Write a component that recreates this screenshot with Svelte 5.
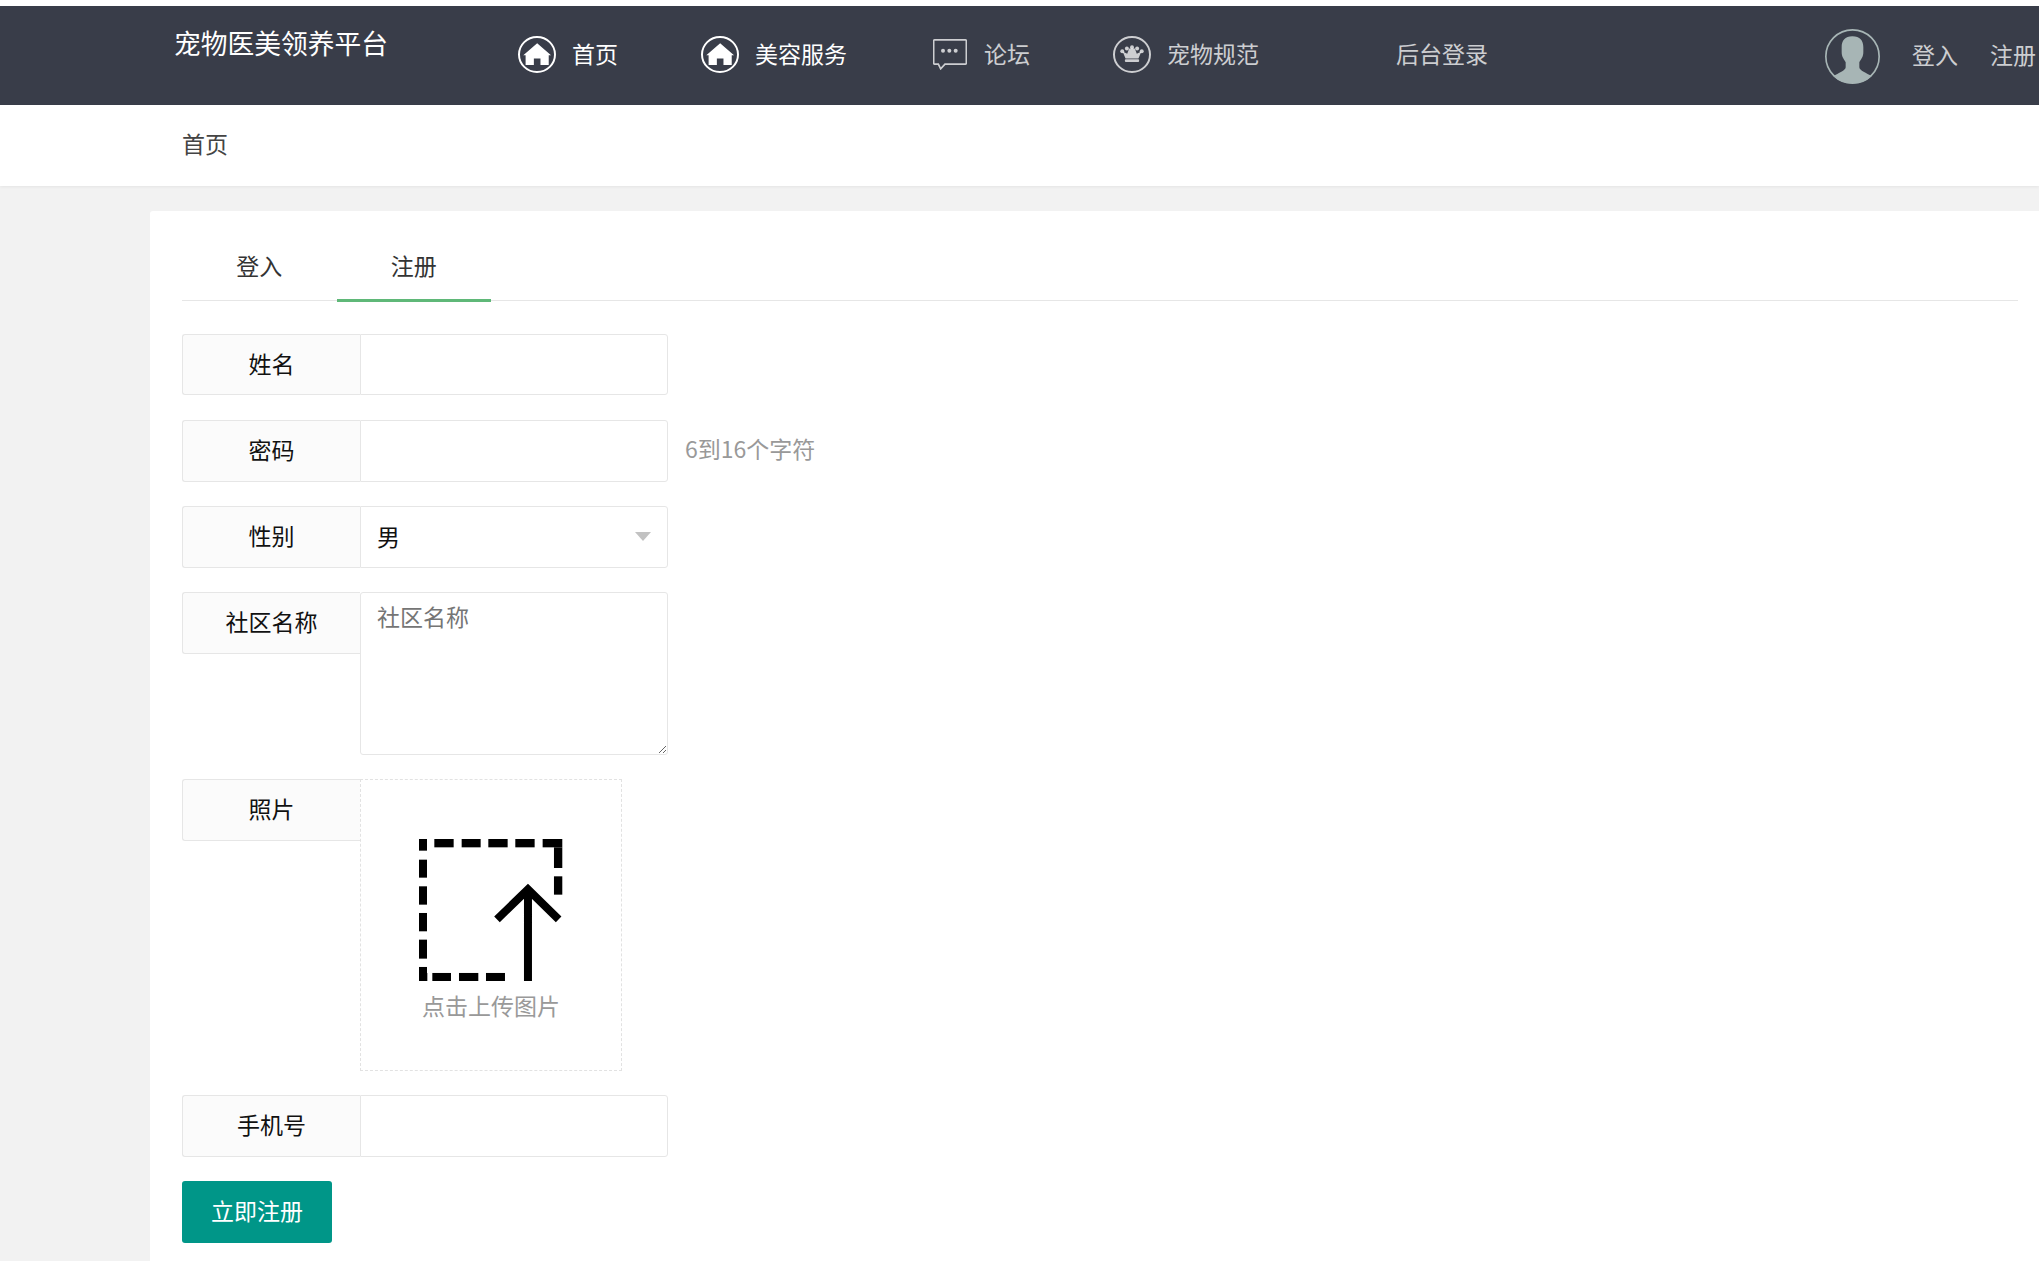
<script>
  const iconRects = [
    [0,0,24,35],[46,0,58,25],[128,0,57,25],[208,0,58,25],[289,0,58,25],[371,0,59,25],
    [405,25,25,62],[405,112,25,55],
    [0,62,24,54],[0,142,24,55],[0,222,24,55],[0,302,24,57],[0,384,24,43],
    [24,402,1,25],[40,402,56,25],[120,402,58,25],[201,402,57,25]
  ];
</script>

<div class="page">
  <header class="topbar">
    <div class="logo">宠物医美领养平台</div>
    <nav class="mainnav">
      <a class="item on">
        <svg class="ic" viewBox="0 0 115 112"><ellipse cx="57.5" cy="56" rx="54.5" ry="53" fill="none" stroke="currentColor" stroke-width="6"/><path d="M58 22 100 58H93V88H68V68H48V88H23V58H16Z" fill="currentColor"/></svg>
        <span>首页</span>
      </a>
      <a class="item on">
        <svg class="ic" viewBox="0 0 115 112"><ellipse cx="57.5" cy="56" rx="54.5" ry="53" fill="none" stroke="currentColor" stroke-width="6"/><path d="M58 22 100 58H93V88H68V68H48V88H23V58H16Z" fill="currentColor"/></svg>
        <span>美容服务</span>
      </a>
      <a class="item">
        <svg class="ic chat" viewBox="0 0 102 92"><path d="M5 2H97Q100 2 100 5V72Q100 75 97 75H36L23 89 16 75H5Q2 75 2 72V5Q2 2 5 2Z" fill="none" stroke="currentColor" stroke-width="5"/><circle cx="30" cy="35" r="6" fill="currentColor"/><circle cx="49" cy="35" r="6" fill="currentColor"/><circle cx="68" cy="35" r="6" fill="currentColor"/></svg>
        <span>论坛</span>
      </a>
      <a class="item">
        <svg class="ic" viewBox="0 0 115 112"><ellipse cx="57.5" cy="56" rx="54.5" ry="53" fill="none" stroke="currentColor" stroke-width="6"/><g fill="currentColor"><path d="M29 47 38 68H77L86 47 72 54 66 38H49L43 54Z"/><rect x="36" y="70" width="43" height="9" rx="3"/><circle cx="28" cy="46" r="6"/><circle cx="42" cy="38" r="6"/><circle cx="57.500" cy="34" r="6"/><circle cx="73" cy="38" r="6"/><circle cx="87" cy="46" r="6"/></g></svg>
        <span>宠物规范</span>
      </a>
      <a class="item admin"><span>后台登录</span></a>
    </nav>
    <div class="user">
      <svg class="avatar" viewBox="0 0 165 165"><circle cx="82.500" cy="82.500" r="80" fill="none" stroke="currentColor" stroke-width="5"/><path d="M82 22C60 22 50 35 50 55V70C50 85 58 92 62 100V115C62 125 40 132 25 142 42 158 62 163 82 163 103 163 123 158 140 142 125 132 103 125 103 115V100C107 92 115 85 115 70V55C115 35 105 22 82 22Z" fill="currentColor"/></svg>
      <a class="ulink first">登入</a>
      <a class="ulink">注册</a>
    </div>
  </header>

  <div class="crumb">首页</div>

  <main class="card">
    <ul class="tabs">
      <li>登入</li>
      <li class="active">注册</li>
    </ul>

    <form class="form" onsubmit={(e) => e.preventDefault()}>
      <div class="row short">
        <label class="lab" for="name">姓名</label>
        <input id="name" class="box" type="text" />
      </div>
      <div class="row">
        <label class="lab" for="pass">密码</label>
        <input id="pass" class="box" type="password" />
        <span class="hint">6到16个字符</span>
      </div>
      <div class="row">
        <div class="lab">性别</div>
        <div class="box select">男<i class="caret"></i></div>
      </div>
      <div class="row">
        <label class="lab" for="community">社区名称</label>
        <textarea id="community" class="box area" placeholder="社区名称"></textarea>
      </div>
      <div class="row">
        <div class="lab">照片</div>
        <div class="drop">
          <svg class="upload" viewBox="0 0 430 427">
            {#each iconRects as r}
              <rect x={r[0]} y={r[1]} width={r[2]} height={r[3]} fill="#000" />
            {/each}
            <path d="M234 241 327 151 419 241M327 151V427" fill="none" stroke="#000" stroke-width="24" />
          </svg>
          <p>点击上传图片</p>
        </div>
      </div>
      <div class="row">
        <label class="lab" for="phone">手机号</label>
        <input id="phone" class="box" type="text" />
      </div>
      <button class="submit" type="submit">立即注册</button>
    </form>
  </main>
</div>

<style>
  :global(body) {
    margin: 0;
    background: #f2f2f2;
    overflow: hidden;
  }
  .page {
    height: 1261px;
    overflow: hidden;
    padding-top: 6px;
    box-sizing: border-box;
    background: #f2f2f2;
    font-family: "Noto Sans CJK SC", "Noto Sans", sans-serif;
    font-size: 23px;
    font-weight: 400;
    color: #333;
    position: relative;
  }
  .page::before {
    content: "";
    position: absolute;
    top: 0;
    left: 0;
    right: 0;
    height: 6px;
    background: #fff;
  }
  .topbar {
    height: 99px;
    background: #393d49;
    display: flex;
    align-items: center;
    padding-left: 174px;
    color: #fff;
  }
  .logo {
    width: 214px;
    font-size: 26.750px;
    line-height: 36px;
    margin-top: -25px;
    white-space: nowrap;
  }
  .mainnav {
    display: flex;
    align-items: center;
    margin-left: 130px;
    margin-top: -2px;
  }
  .item {
    display: flex;
    align-items: center;
    gap: 16px;
    margin-right: 83px;
    color: rgba(255, 255, 255, 0.75);
    white-space: nowrap;
  }
  .item span {
    position: relative;
    top: -2px;
  }
  .item.on {
    color: #fff;
  }
  .ic {
    width: 38px;
    height: 37px;
    flex: none;
  }
  .ic.chat {
    width: 34px;
    height: 31px;
    margin-left: 3px;
    margin-right: 1px;
  }
  .admin {
    margin-left: 54px;
    margin-right: 0;
  }
  .user {
    margin-left: auto;
    display: flex;
    align-items: center;
    padding-right: 3px;
    color: rgba(255, 255, 255, 0.75);
    white-space: nowrap;
  }
  .avatar {
    width: 55px;
    height: 55px;
    color: #a7b5b5;
    position: relative;
    top: 1px;
  }
  .ulink {
    position: relative;
    top: -2px;
  }
  .ulink.first {
    margin-left: 32px;
    margin-right: 32px;
  }
  .crumb {
    height: 81px;
    box-sizing: border-box;
    padding-left: 182px;
    line-height: 76px;
    background: #fff;
    box-shadow: 0 1px 3px rgba(0, 0, 0, 0.06);
    position: relative;
    color: #444;
  }
  .card {
    margin: 25px 0 0 150px;
    padding: 25px 21px 0 32px;
    height: 1100px;
    background: #fff;
    border-radius: 3px 0 0 0;
  }
  .tabs {
    display: flex;
    list-style: none;
    margin: 0;
    padding: 0;
    height: 65px;
    box-sizing: border-box;
    border-bottom: 1px solid #e6e6e6;
  }
  .tabs li {
    width: 154.500px;
    height: 66px;
    line-height: 59px;
    text-align: center;
    box-sizing: border-box;
    color: #333;
  }
  .tabs li.active {
    border-bottom: 3px solid #5fb878;
  }
  .form {
    margin-top: 33px;
  }
  .row {
    display: flex;
    align-items: flex-start;
    margin-bottom: 24px;
  }
  .row.short {
    margin-bottom: 25px;
  }
  .short .lab,
  .short .box {
    height: 61px;
  }
  .lab {
    width: 178px;
    height: 62px;
    flex: none;
    box-sizing: border-box;
    border: 1px solid #e6e6e6;
    border-right: none;
    border-radius: 3px 0 0 3px;
    background: #fbfbfb;
    line-height: 57px;
    text-align: center;
    color: #111;
  }
  .box {
    width: 308px;
    height: 62px;
    box-sizing: border-box;
    border: 1px solid #e6e6e6;
    border-radius: 0 3px 3px 0;
    background: #fff;
    padding: 0 16px;
    margin: 0;
    font: inherit;
    outline: none;
    color: #111;
  }
  .select {
    position: relative;
    line-height: 58px;
  }
  .caret {
    position: absolute;
    right: 16px;
    top: 25px;
    width: 0;
    height: 0;
    border-left: 8.500px solid transparent;
    border-right: 8.500px solid transparent;
    border-top: 9px solid #c2c2c2;
  }
  .hint {
    margin-left: 17px;
    line-height: 56px;
    color: #999;
  }
  .area {
    height: 163px;
    padding: 7px 16px;
    line-height: 32px;
    display: block;
    border-radius: 3px;
  }
  .drop {
    width: 262px;
    height: 292px;
    box-sizing: border-box;
    border: 1px dashed #e2e2e2;
    display: flex;
    flex-direction: column;
    align-items: center;
    padding-top: 59px;
  }
  .upload {
    display: block;
    width: 143.300px;
    height: 142.300px;
  }
  .drop p {
    margin: 8px 0 0;
    font-size: 23px;
    line-height: 32px;
    color: #999;
  }
  .submit {
    display: block;
    width: 150px;
    height: 62px;
    padding: 0 0 4px;
    border: none;
    border-radius: 3px;
    background: #009688;
    color: #fff;
    font: inherit;
  }
</style>
